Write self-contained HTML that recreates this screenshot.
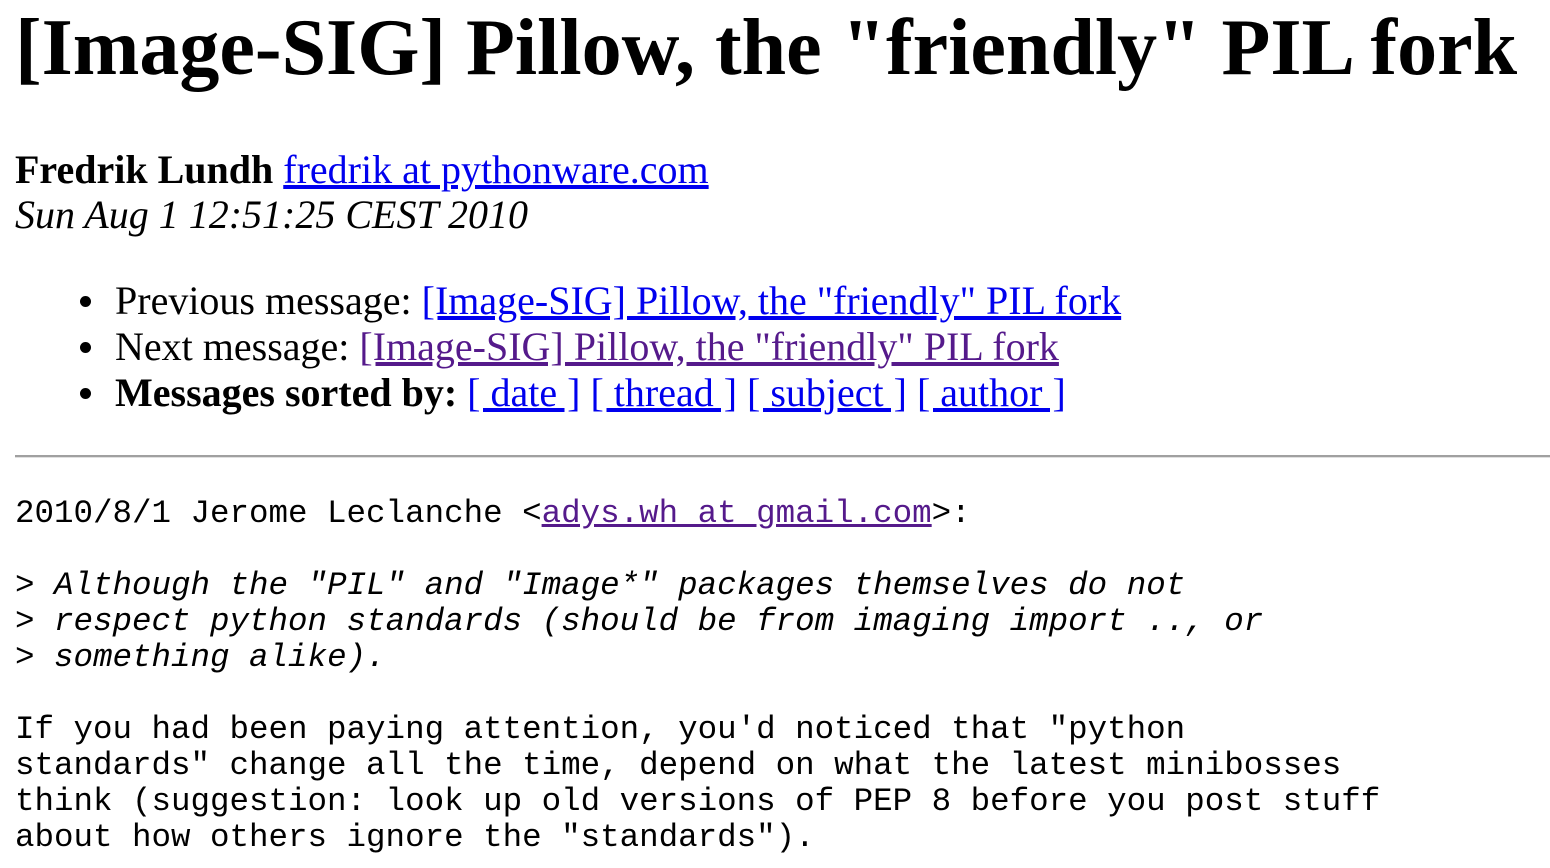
<!DOCTYPE html>
<html><head><meta charset="utf-8">
<style>
html,body{margin:0;padding:0;background:#fff;width:1550px;height:868px;overflow:hidden;color:#000}
.a{position:absolute;white-space:nowrap;line-height:1}
.s{font-family:"Liberation Serif",serif}
h1{margin:0;font-size:80px;font-weight:bold;left:15px;top:8px}
.b{font-size:40px}
a{color:#0000EE;text-decoration:underline}
a.v{color:#551A8B}
.dot{position:absolute;width:11px;height:11px;border-radius:50%;background:#000}
hr{position:absolute;left:15px;top:455px;width:1535px;margin:0;border:0;border-top:2px solid #a0a0a0;border-bottom:1px solid #e0e0e0}
pre{position:absolute;left:15px;top:496px;margin:0;font-family:"Liberation Mono",monospace;font-size:32.5px;line-height:36px}
</style></head><body>
<h1 class="a s">[Image-SIG] Pillow, the "friendly" PIL fork</h1>
<div class="a s b" style="left:15px;top:150px"><b>Fredrik Lundh</b> <a href="#">fredrik at pythonware.com</a></div>
<div class="a s b" style="left:15px;top:195px"><i>Sun Aug 1 12:51:25 CEST 2010</i></div>
<div class="dot" style="left:80px;top:296px"></div>
<div class="dot" style="left:80px;top:342px"></div>
<div class="dot" style="left:80px;top:388px"></div>
<div class="a s b" style="left:115px;top:281px">Previous message: <a href="#">[Image-SIG] Pillow, the "friendly" PIL fork</a></div>
<div class="a s b" style="left:115px;top:327px">Next message: <a class="v" href="#">[Image-SIG] Pillow, the "friendly" PIL fork</a></div>
<div class="a s b" style="left:115px;top:373px"><b>Messages sorted by:</b> <a href="#">[ date ]</a> <a href="#">[ thread ]</a> <a href="#">[ subject ]</a> <a href="#">[ author ]</a></div>
<hr>
<pre>2010/8/1 Jerome Leclanche &lt;<a class="v" href="#">adys.wh at gmail.com</a>&gt;:

&gt;<i> Although the "PIL" and "Image*" packages themselves do not
</i>&gt;<i> respect python standards (should be from imaging import .., or
</i>&gt;<i> something alike).
</i>
If you had been paying attention, you'd noticed that "python
standards" change all the time, depend on what the latest minibosses
think (suggestion: look up old versions of PEP 8 before you post stuff
about how others ignore the "standards").</pre>
</body></html>
